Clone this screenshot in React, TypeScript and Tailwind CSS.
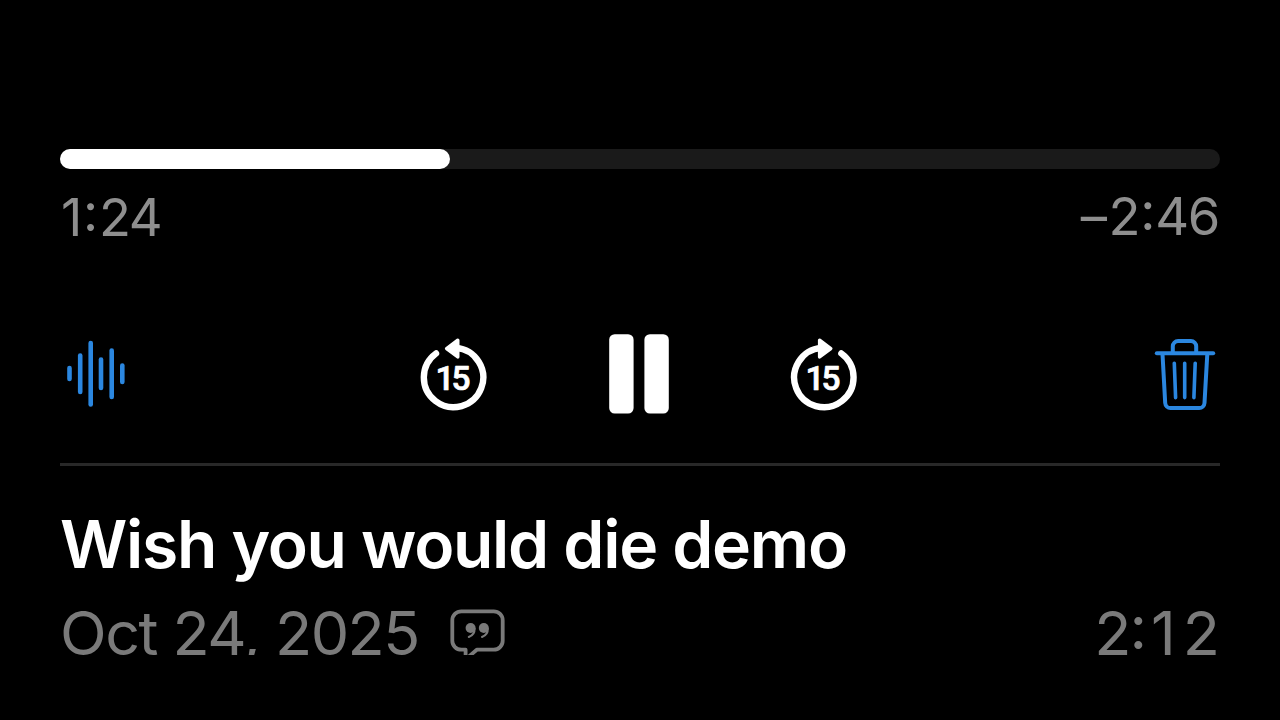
interface Recording {
  title: string;
  date: string;
}

const progress = 33.62;

const nextRecording: Recording = {
  title: 'Wish you would die demo',
  date: 'Oct 24, 2025',
};

// x, top, bottom of every bar
const bars = [
  [9.5, 34, 45],
  [20.2, 21.5, 58],
  [30.7, 9, 70.5],
  [41, 25.5, 54],
  [51.7, 16.5, 63],
  [62.3, 31.5, 48],
];

function WaveformIcon() {
  return (
    <svg width="66" height="80" viewBox="0 0 66 80" stroke="currentColor" strokeWidth="4.6" strokeLinecap="round">
      {bars.map(([x, top, bottom]) => (
        <line key={x} x1={x} x2={x} y1={top} y2={bottom} />
      ))}
    </svg>
  );
}

function SkipIcon({ forward = false }: { forward?: boolean }) {
  return (
    <svg width="68" height="80" viewBox="0 0 68 80" fill="none">
      <g transform={forward ? 'matrix(-1 0 0 1 67.4 0)' : undefined}>
        <path d="M36 13.87A29.7 29.7 0 1 1 16 19.5" stroke="currentColor" strokeWidth="6.4" strokeLinecap="round" />
        <path
          d="M26.6 14.6 37.8 6.2V23Z"
          fill="currentColor"
          stroke="currentColor"
          strokeWidth="3.4"
          strokeLinejoin="round"
        />
      </g>
      <text
        x="15.4 31.6"
        y="55.8"
        fill="currentColor"
        stroke="currentColor"
        strokeWidth="0.7"
        strokeLinejoin="round"
        className="font-['Roboto',sans-serif] text-[33.5px] font-medium"
      >
        15
      </text>
    </svg>
  );
}

function PauseIcon() {
  return (
    <svg width="62" height="80" viewBox="0 0 62 80" fill="currentColor">
      <rect x="1.2" y="0.2" width="24.4" height="79.4" rx="5.5" />
      <rect x="36.4" y="0.2" width="24.4" height="79.4" rx="5.5" />
    </svg>
  );
}

function TrashIcon() {
  return (
    <svg
      width="66"
      height="80"
      viewBox="0 0 66 80"
      fill="none"
      stroke="currentColor"
      strokeWidth="4"
      strokeLinecap="round"
      strokeLinejoin="round"
    >
      <path d="M2.8 19.3H59.2" />
      <path d="M18.8 19V12.3A5.3 5.3 0 0 1 24.1 7H36.9A5.3 5.3 0 0 1 42.2 12.3V19" />
      <path d="M8.5 20 11.2 69A5.3 5.3 0 0 0 16.5 74H45.2A5.3 5.3 0 0 0 50.5 69L53.3 20" />
      <path d="M20.3 29.2 21.6 63.6M30.7 29.2V63.6M41.2 29.2 39.9 63.6" strokeWidth="3.6" />
    </svg>
  );
}

function TranscriptIcon() {
  return (
    <svg width="56" height="56" viewBox="0 0 56 56" fill="none" stroke="currentColor" strokeWidth="3.8">
      <path
        d="M15.6 50V40.7H11.3A9 9 0 0 1 2.3 31.7V11.3A9 9 0 0 1 11.3 2.3H43.7A9 9 0 0 1 52.7 11.3V31.7A9 9 0 0 1 43.7 40.7H26.8L15.6 50.4"
        strokeLinejoin="round"
      />
      {[0, 13.2].map((dx) => (
        <g key={dx} transform={`translate(${dx} 0)`}>
          <circle cx="20.6" cy="19" r="5" fill="currentColor" stroke="none" />
          <path d="M24.5 19.5C24.8 23.6 22.4 26.6 18.8 27.9" strokeWidth="2.1" strokeLinecap="round" />
        </g>
      ))}
    </svg>
  );
}

// colon centred on the height of the digits
function Colon({ className = '' }: { className?: string }) {
  return <span className={`[font-feature-settings:'case'] ${className}`}>:</span>;
}

export default function App() {
  return (
    <div className="h-[720px] w-[1280px] overflow-hidden bg-black font-['Inter',sans-serif]">
      {/* the list is cut off right under the date row */}
      <main className="h-[655px] overflow-hidden px-[60px] pt-[149px]">
        <div className="h-[20.4px] overflow-hidden rounded-full bg-[#1a1a1a]">
          <div className="h-full rounded-r-full bg-white" style={{ width: `${progress}%` }} />
        </div>

        <div className="mt-[17.6px] flex h-[60px] justify-between px-px text-[52.5px] leading-[60px] tracking-[-1.3px] text-[#8e8e8e]">
          <span>
            1<Colon className="mr-0.5 ml-0.5" />
            24
          </span>
          <span className="-mt-px">
            <span className="mr-[3px]">–</span>2<Colon className="mr-px ml-px" />
            46
          </span>
        </div>

        <div className="mt-[87px] flex items-center justify-between text-white">
          <button className="text-[#2b87e0]" aria-label="Edit">
            <WaveformIcon />
          </button>
          <div className="flex w-[440px] gap-[120px]">
            <button aria-label="Back 15 seconds">
              <SkipIcon />
            </button>
            <button aria-label="Pause">
              <PauseIcon />
            </button>
            <button aria-label="Forward 15 seconds">
              <SkipIcon forward />
            </button>
          </div>
          <button className="text-[#2b87e0]" aria-label="Delete">
            <TrashIcon />
          </button>
        </div>

        <div className="mt-[49px] h-[3px] bg-[#282828]" />

        <h2 className="mt-[42px] text-[66px] leading-[72px] font-semibold tracking-[-1.3px] whitespace-nowrap text-white">
          {nextRecording.title}
        </h2>
        <div className="mt-[17px] flex justify-between text-[61px] leading-[72px] text-[#7a7a7a]">
          <div className="flex">
            <span className="w-[390px] tracking-[-1.5px] whitespace-nowrap">{nextRecording.date}</span>
            <div className="mt-3">
              <TranscriptIcon />
            </div>
          </div>
          <span>
            2<Colon className="mr-1 -ml-0.5" />
            <span className="mr-[7px]">1</span>2
          </span>
        </div>
      </main>
    </div>
  );
}
